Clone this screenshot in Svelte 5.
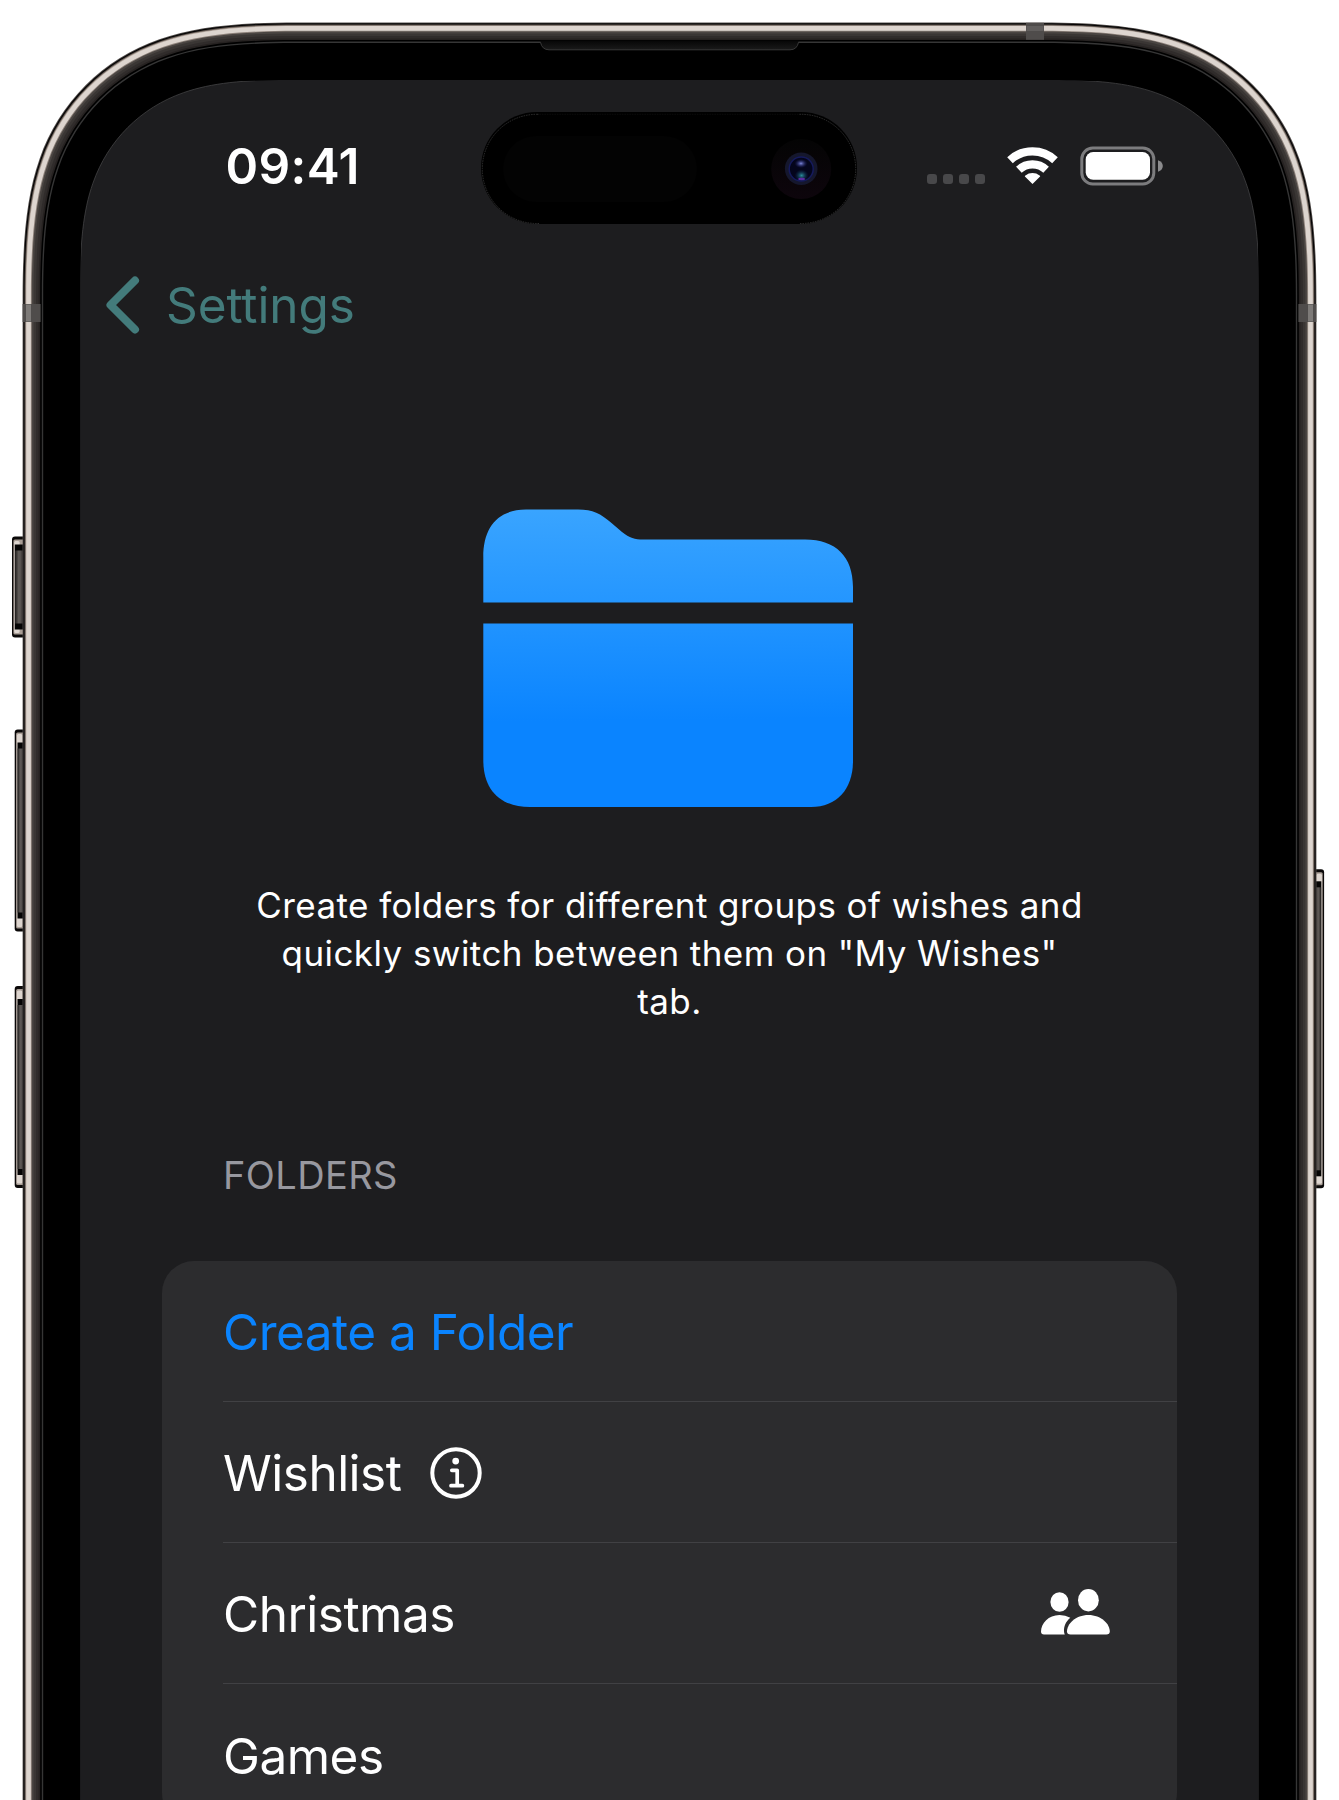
<script>
  const W = 1339;
  const OUT = { x: 22.6, y: 22.4, r: 217 };

  // Rounded "continuous" corner outline, open past the bottom of the view.
  function outline(inset) {
    const l = OUT.x + inset;
    const t = OUT.y + inset;
    const R = W - l;
    const r = OUT.r - inset * 0.92;
    const k = (n) => n * r;
    return [
      `M${l} 1900V${t + k(1.27)}`,
      `C${l} ${t + k(1.0)} ${l + k(0.018)} ${t + k(0.8)} ${l + k(0.078)} ${t + k(0.63)}`,
      `C${l + k(0.168)} ${t + k(0.37)} ${l + k(0.37)} ${t + k(0.168)} ${l + k(0.63)} ${t + k(0.078)}`,
      `C${l + k(0.8)} ${t + k(0.018)} ${l + k(1.0)} ${t} ${l + k(1.27)} ${t}`,
      `H${R - k(1.27)}`,
      `C${R - k(1.0)} ${t} ${R - k(0.8)} ${t + k(0.018)} ${R - k(0.63)} ${t + k(0.078)}`,
      `C${R - k(0.37)} ${t + k(0.168)} ${R - k(0.168)} ${t + k(0.37)} ${R - k(0.078)} ${t + k(0.63)}`,
      `C${R - k(0.018)} ${t + k(0.8)} ${R} ${t + k(1.0)} ${R} ${t + k(1.27)}`,
      `V1900Z`
    ].join('');
  }

  const layers = [
    [0, '#55504e'],
    [0.8, '#050404'],
    [2, '#5d534d'],
    [3, '#b3a79e'],
    [3.7, '#ddd5cf'],
    [8.3, '#8d827b'],
    [9.2, '#4a4542'],
    [11, '#3a3634'],
    [13.5, '#302c2b'],
    [16, '#262221'],
    [17.6, '#000000'],
    [19.2, '#363636'],
    [20.6, '#000000'],
    [57.5, '#1d1d1f']
  ];

  const sideButtons = [
    { x: 12, y: 536.5, h: 101, cap: 8, right: false },
    { x: 14.7, y: 729.5, h: 202, cap: 13, right: false },
    { x: 14.7, y: 986, h: 202, cap: 13, right: false },
    { x: 14.9, y: 869.3, h: 319, cap: 12, right: true }
  ];

  const rows = [
    { label: 'Create a Folder', kind: 'action' },
    { label: 'Wishlist', kind: 'info' },
    { label: 'Christmas', kind: 'shared' },
    { label: 'Games', kind: 'plain' }
  ];
</script>

<main class="stage">
  <svg class="device" viewBox="0 0 1339 1800" aria-hidden="true">
    <defs>
      <linearGradient id="btn" x1="0" x2="1">
        <stop offset="0" stop-color="#1e1b1a" />
        <stop offset="0.45" stop-color="#5e5956" />
        <stop offset="0.75" stop-color="#55504e" />
        <stop offset="1" stop-color="#1e1b1a" />
      </linearGradient>
      <linearGradient id="ear" x1="0" x2="0" y1="0" y2="1">
        <stop offset="0" stop-color="#060606" />
        <stop offset="1" stop-color="#1a1a1a" />
      </linearGradient>
      <clipPath id="corners">
        <rect x="81" y="81" width="180" height="180" />
        <rect x="1078" y="81" width="180" height="180" />
      </clipPath>
    </defs>
    {#each sideButtons as b}
      <g transform={b.right ? 'translate(1339 0) scale(-1 1)' : undefined}>
        <rect x={b.x} y={b.y} width="20" height={b.h} rx="3" fill="#0a0808" />
        <rect x={b.x + 1.4} y={b.y + 3} width="20" height={b.h - 6} rx="1.5" fill="#a89d95" />
        <rect x={b.x + 2.2} y={b.y + 4.5} width="5.4" height={b.h - 9} rx="1.5" fill="#ddd5cf" />
        <rect x={b.x + 2.8} y={b.y + b.cap} width="20" height={b.h - b.cap * 2} fill="#050404" />
        <rect x={b.x + 3} y={b.y + b.cap + 6} width={23 - b.x - 3} height={b.h - b.cap * 2 - 12} fill="url(#btn)" />
      </g>
    {/each}
    {#each layers as [inset, fill]}
      <path d={outline(inset)} {fill} />
    {/each}
    <path d={outline(57.5)} clip-path="url(#corners)" fill="none" stroke="#4a4a4c" stroke-width="0.7" />
    <g fill="#4f4c4b">
      <rect x="22.6" y="304" width="18" height="18" />
      <rect x="1298.4" y="304" width="18" height="18" />
      <rect x="1026" y="22.8" width="18" height="17" />
    </g>
    <g fill="#7d7a78">
      <rect x="26" y="304.5" width="5" height="17" />
      <rect x="1308" y="304.5" width="5" height="17" />
      <rect x="1026.5" y="26" width="17" height="5" opacity="0.4" />
    </g>
    <path d="M540.5 40.5V42Q542 49.8 549 49.8H790Q797 49.8 798.5 42V40.5Z" fill="url(#ear)" />
    <path d="M540.5 42.3Q542 49.8 549 49.8H790Q797 49.8 798.5 42.3" fill="none" stroke="#383838" />
  </svg>

  <div class="screen">
    <header class="status">
      <span class="time">09:41</span>
      <svg class="island" viewBox="0 0 376 112" aria-hidden="true">
        <defs>
          <linearGradient id="cam" x1="0" x2="0" y1="0" y2="1">
            <stop offset="0" stop-color="#040404" />
            <stop offset="1" stop-color="#0d050c" />
          </linearGradient>
          <radialGradient id="blue">
            <stop offset="0" stop-color="#7d86dc" />
            <stop offset="1" stop-color="#1a1f70" stop-opacity="0" />
          </radialGradient>
          <radialGradient id="teal">
            <stop offset="0" stop-color="#2c8f9b" />
            <stop offset="1" stop-color="#0c2a55" stop-opacity="0" />
          </radialGradient>
        </defs>
        <rect width="376" height="112" rx="56" fill="#000" />
        <rect x="1.3" y="2.3" width="373.4" height="109.2" rx="54.6" fill="none" stroke="#3a3a3a" stroke-width="0.8" stroke-dasharray="1.5 1" />
        <path d="M58 2H318M58 111.6H318" stroke="#000" stroke-width="1.6" />
        <rect x="22" y="24" width="194" height="66" rx="33" fill="#030303" />
        <circle cx="320.2" cy="57" r="30" fill="url(#cam)" />
        <circle cx="320.2" cy="56.8" r="16.3" fill="#15172d" />
        <circle cx="320.2" cy="57" r="12" fill="#04051c" stroke="#151a5c" stroke-width="1.5" />
        <ellipse cx="320" cy="51.5" rx="6.5" ry="4.5" fill="url(#blue)" />
        <ellipse cx="320.6" cy="63.5" rx="7" ry="6" fill="url(#teal)" />
        <ellipse cx="320.6" cy="67" rx="3.4" ry="1.2" fill="#5b2ba0" />
      </svg>
      <div class="indicators">
        <div class="dots"><i></i><i></i><i></i><i></i></div>
        <svg class="wifi" viewBox="0 0 51 38" aria-hidden="true">
          <path d="M3 13.2A33 33 0 0 1 48 13.2" />
          <path d="M11.9 22.7A20 20 0 0 1 39.1 22.7" />
          <path class="wedge" d="M25.5 37L17.9 29.6Q17.6 28.9 18.4 28.4A12 12 0 0 1 32.6 28.4Q33.4 28.9 33.1 29.6Z" />
        </svg>
        <svg class="battery" viewBox="0 0 84 40" aria-hidden="true">
          <rect x="1.8" y="2" width="72" height="36" rx="11" fill="none" stroke="#7c7c7e" stroke-width="3" />
          <rect x="5.7" y="6" width="64.3" height="27.8" rx="7.5" fill="#fff" />
          <path d="M78 14.2Q82.8 16 82.8 20T78 25.8Z" fill="#8b8b8d" />
        </svg>
      </div>
    </header>

    <nav class="nav">
      <svg class="chevron" viewBox="0 0 36 60" aria-hidden="true">
        <path d="M31 5.5L6.5 30L31 54.5" />
      </svg>
      <span class="back">Settings</span>
    </nav>

    <section class="hero">
      <svg class="folder" viewBox="483 509 371 299" aria-hidden="true">
        <defs>
          <linearGradient id="fold" gradientUnits="userSpaceOnUse" x1="668" x2="670" y1="509" y2="720">
            <stop offset="0" stop-color="#39a4ff" />
            <stop offset="0.45" stop-color="#2496ff" />
            <stop offset="1" stop-color="#0a84ff" />
          </linearGradient>
        </defs>
        <path fill="url(#fold)" d="M483.3 602.5V557C483.3 527 498 509.6 526 509.6H578C593 509.6 600.5 513.8 611.5 523L622 532C629.5 538 635 539.6 643 539.6H805C836 539.6 853 557 853 587V602.5Z" />
        <path fill="url(#fold)" d="M483.3 623.5H853V761C853 789 837 807 811 807H530C500 807 483.3 790 483.3 760Z" />
      </svg>
      <p class="blurb">Create folders for different groups of wishes and<br />quickly switch between them on "My Wishes"<br />tab.</p>
    </section>

    <section class="folders">
      <h2>FOLDERS</h2>
      <ul class="card">
        {#each rows as row}
          <li class="row">
            <span class="label" class:action={row.kind === 'action'}>{row.label}</span>
            {#if row.kind === 'info'}
              <svg class="info-icon" viewBox="0 0 52 52" aria-hidden="true">
                <circle cx="26" cy="26" r="23.7" fill="none" stroke="#fff" stroke-width="4" />
                <circle cx="25.7" cy="14.1" r="3.4" fill="#fff" />
                <path d="M21.8 23.3H27.2V38.5M21 38.7H32.4" fill="none" stroke="#fff" stroke-width="3.7" stroke-linecap="round" stroke-linejoin="round" />
              </svg>
            {:else if row.kind === 'shared'}
              <svg class="people-icon" viewBox="1041 1590 69 46" aria-hidden="true">
                <g fill="#fff">
                  <ellipse cx="1059.5" cy="1603" rx="9.1" ry="9.8" />
                  <ellipse cx="1088.4" cy="1601.2" rx="10.4" ry="11.2" />
                  <path d="M1044 1635.5Q1041 1635.5 1041 1632.5C1041 1624.5 1048.5 1616 1059.5 1616Q1065.5 1616 1070.3 1618.7C1065.5 1622.7 1063.8 1627.5 1064 1632.3Q1064.1 1634.2 1064.8 1635.5Z" />
                  <path d="M1070.5 1635.5Q1067 1635.5 1067 1632.5C1067 1625 1075.5 1616 1088.4 1616S1109.8 1625 1109.8 1632.5Q1109.8 1635.5 1106.3 1635.5Z" />
                </g>
              </svg>
            {/if}
          </li>
        {/each}
      </ul>
    </section>
  </div>
</main>

<style>
  :global(body) {
    margin: 0;
    background: #fff;
  }
  .stage {
    position: relative;
    width: 1339px;
    height: 1800px;
    overflow: hidden;
    font-family: Inter, 'Liberation Sans', sans-serif;
    color: #fff;
  }
  .device {
    position: absolute;
    inset: 0;
    width: 1339px;
    height: 1800px;
  }
  .screen {
    position: relative;
    box-sizing: border-box;
    width: 1179px;
    height: 1800px;
    margin: 0 80px;
    padding-top: 112px;
    overflow: hidden;
  }
  .status {
    display: flex;
    height: 112px;
  }
  .time {
    box-sizing: border-box;
    width: 401.3px;
    padding-left: 145.5px;
    font-size: 49.5px;
    font-weight: 600;
    line-height: 108px;
    letter-spacing: 0.4px;
  }
  .island {
    width: 376px;
    height: 112px;
  }
  .indicators {
    display: flex;
    align-items: flex-start;
    padding: 34px 0 0 69.4px;
  }
  .dots {
    display: flex;
    gap: 6px;
    margin: 28px 22.5px 0 0;
  }
  .dots i {
    width: 10px;
    height: 10px;
    border-radius: 3px;
    background: #48484a;
  }
  .wifi {
    width: 51px;
    height: 38px;
    margin: 1px 22px 0 0;
  }
  .wifi path {
    fill: none;
    stroke: #fff;
    stroke-width: 8.2;
  }
  .wifi .wedge {
    fill: #fff;
    stroke: none;
  }
  .battery {
    width: 84px;
    height: 40px;
  }
  .nav {
    display: flex;
    align-items: center;
    height: 162px;
    padding-left: 24px;
    color: #437b7b;
  }
  .chevron {
    width: 36px;
    height: 60px;
    margin-right: 26px;
  }
  .chevron path {
    fill: none;
    stroke: #437b7b;
    stroke-width: 8;
    stroke-linecap: round;
    stroke-linejoin: round;
  }
  .back {
    font-size: 49.5px;
    letter-spacing: -0.1px;
  }
  .hero {
    display: flex;
    flex-direction: column;
    align-items: center;
    padding-top: 123px;
  }
  .folder {
    width: 371px;
    height: 299px;
    margin-right: 2px;
  }
  .blurb {
    margin: 73.4px 0 0;
    font-size: 35px;
    line-height: 48px;
    letter-spacing: 0.43px;
    text-align: center;
    white-space: nowrap;
  }
  .folders {
    padding: 125.6px 82px 0;
  }
  h2 {
    margin: 0 0 61.7px 61px;
    color: #98989f;
    font-size: 38px;
    font-weight: 400;
    line-height: 48px;
    letter-spacing: 0.4px;
  }
  .card {
    margin: 0;
    padding: 0;
    border-radius: 32px;
    background: #2c2c2e;
    list-style: none;
  }
  .row {
    display: flex;
    align-items: center;
    box-sizing: border-box;
    height: 141.2px;
    margin-left: 60.5px;
    padding-top: 1.5px;
    border-bottom: 1px solid #414144;
  }
  .row:last-child {
    border-bottom: 0;
  }
  .label {
    padding-left: 0.6px;
    font-size: 49.5px;
    letter-spacing: -0.53px;
  }
  .action {
    color: #0a84ff;
  }
  .info-icon {
    width: 52px;
    height: 52px;
    margin-left: 29px;
  }
  .people-icon {
    width: 69px;
    height: 46px;
    margin: 0 67.3px 3px auto;
  }
</style>
